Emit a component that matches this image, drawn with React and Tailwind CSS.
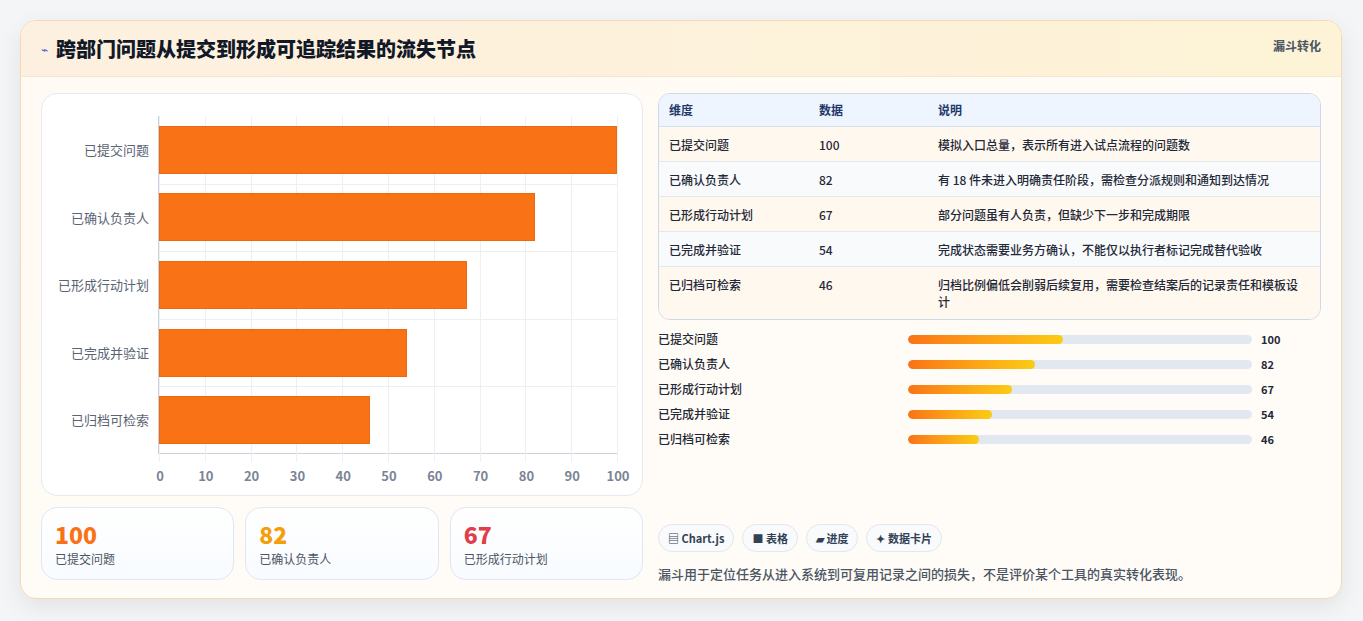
const F = { fontFamily: '"Noto Sans CJK SC","Noto Sans",sans-serif' };
const data = [
  ["已提交问题", 100, "模拟入口总量，表示所有进入试点流程的问题数"],
  ["已确认负责人", 82, "有 18 件未进入明确责任阶段，需检查分派规则和通知到达情况"],
  ["已形成行动计划", 67, "部分问题虽有人负责，但缺少下一步和完成期限"],
  ["已完成并验证", 54, "完成状态需要业务方确认，不能仅以执行者标记完成替代验收"],
  ["已归档可检索", 46, "归档比例偏低会削弱后续复用，需要检查结案后的记录责任和模板设计"],
];
const ticks = [0,10,20,30,40,50,60,70,80,90,100];

function Chart() {
  return (
    <div className="relative h-[403px] rounded-2xl border border-[#e5e9f0] bg-white">
      <div className="absolute left-[116px] top-[22px] w-[459px] h-[338px] border-l border-b border-[#cbd2dc]">
        {ticks.map((t) => (
          <div key={t} className="absolute top-0 h-[346px] border-l border-[#eceff3]" style={{ left: `${t}%` }}>
            <span className="absolute top-[350px] -translate-x-1/2 text-[13px] font-bold text-[#7a8494]">{t}</span>
          </div>
        ))}
        {[1,2,3,4].map((i) => (
          <div key={i} className="absolute left-0 w-full border-t border-[#eceff3]" style={{ top: i * 67.6 }} />
        ))}
        {data.map(([l, v], i) => (
          <div key={l} className="absolute left-0 w-full flex items-center h-[67.6px]" style={{ top: i * 67.6 }}>
            <span className="absolute left-[-116px] w-[106px] text-right whitespace-nowrap text-[13px] text-[#5b6473]">{l}</span>
            <div className="h-[48px] bg-[#f97316] border border-[#ea6a10]" style={{ width: `${v * 4.59}px` }} />
          </div>
        ))}
      </div>
    </div>
  );
}

export default function App() {
  return (
    <div style={F} className="w-[1363px] h-[621px] bg-[#f4f5f7] p-5 pt-5">
      <div className="h-[579px] w-[1322px] rounded-2xl border border-[#f5d9b5] bg-gradient-to-br from-[#fffaf3] to-[#fffcf8] shadow-[0_8px_24px_rgba(0,0,0,0.08)] overflow-hidden">
        <div className="h-[56px] flex items-center justify-between px-5 bg-gradient-to-r from-[#fdf0e0] to-[#fdf3d6] border-b border-[#f5e6cf]">
          <div className="flex items-center gap-2">
            <span className="text-[#4b5bd6] text-[12px]">⌁</span>
            <h1 className="text-[20px] font-black text-[#111827]">跨部门问题从提交到形成可追踪结果的流失节点</h1>
          </div>
          <span className="self-start mt-4 text-[12px] font-bold text-[#4b5563]">漏斗转化</span>
        </div>
        <div className="flex gap-[15px] px-5 pt-[16px]">
          <div className="w-[602px] flex flex-col gap-[11px]">
            <Chart />
            <div className="grid grid-cols-3 gap-[11px]">
              {[["100","text-[#f97316]","已提交问题"],["82","text-[#f59e0b]","已确认负责人"],["67","text-[#e03e4a]","已形成行动计划"]].map(([n,c,l]) => (
                <div key={l} className="h-[73px] rounded-2xl border border-[#dfe7f3] bg-gradient-to-b from-white to-[#f8fbff] px-[13px] pt-[12px]">
                  <div className={`text-[23px] leading-[28px] font-black ${c}`}>{n}</div>
                  <div className="text-[12px] text-[#4b5563] mt-[2px]">{l}</div>
                </div>
              ))}
            </div>
          </div>
          <div className="flex-1 flex flex-col">
            <div className="rounded-xl border border-[#cfd8e6] overflow-hidden text-[12px]">
              <div className="flex h-[33px] items-center bg-[#eef5fe] font-bold text-[#1e3a6b] border-b border-[#d6dfeb]">
                <div className="w-[160px] pl-[10px]">维度</div><div className="w-[119px]">数据</div><div className="flex-1">说明</div>
              </div>
              {data.map(([l, v, d], i) => (
                <div key={l} className={`flex items-start ${i===4?"h-[52px]":"h-[35px]"} pt-[9px] ${i%2===0?"bg-[#fff8ef]":"bg-[#f8fafc]"} ${i<4?"border-b border-[#e3e8ef]":""} text-[#1f2937] font-medium`}>
                  <div className="w-[160px] pl-[10px]">{l}</div><div className="w-[119px]">{v}</div><div className="flex-1 pr-4 leading-[17px]">{d}</div>
                </div>
              ))}
            </div>
            <div className="mt-[10px] flex flex-col gap-[7px]">
              {data.map(([l, v]) => (
                <div key={l} className="flex items-center h-[18px] text-[12px] font-medium text-[#1f2937]">
                  <div className="w-[250px]">{l}</div>
                  <div className="w-[344px] h-[9px] rounded-full bg-[#e2e8f0] overflow-hidden">
                    <div className="h-full rounded-full bg-gradient-to-r from-[#f97316] to-[#facc15]" style={{ width: `${v * 0.45}%` }} />
                  </div>
                  <div className="ml-[9px] font-bold text-[11px]">{v}</div>
                </div>
              ))}
            </div>
            <div className="mt-[76px] flex gap-[8px] text-[11px] font-bold text-[#334155]">
              {["▤ Chart.js","■ 表格","▰ 进度","✦ 数据卡片"].map((t) => (
                <span key={t} className="h-[28px] px-[9px] flex items-center rounded-full border border-[#e2e8f0] bg-[#f8fafc]">{t}</span>
              ))}
            </div>
            <p className="mt-[12px] text-[13px] font-medium text-[#4b5563]">漏斗用于定位任务从进入系统到可复用记录之间的损失，不是评价某个工具的真实转化表现。</p>
          </div>
        </div>
      </div>
    </div>
  );
}
